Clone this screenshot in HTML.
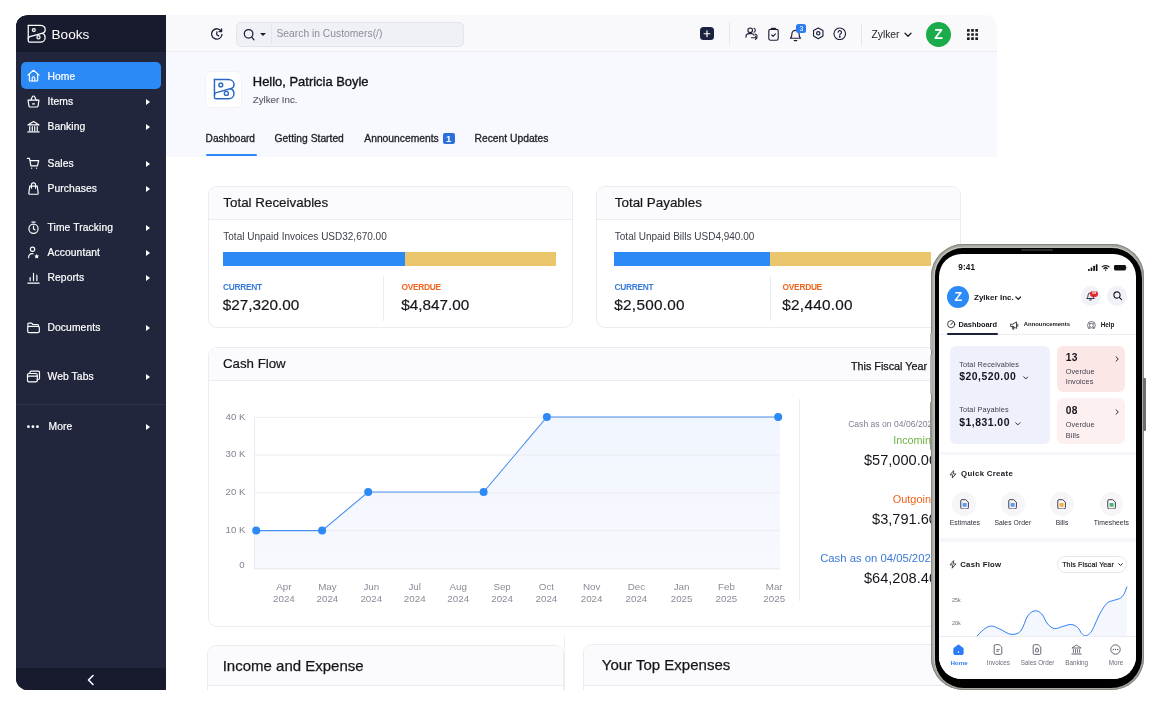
<!DOCTYPE html>
<html lang="en">
<head>
<meta charset="utf-8">
<title>Books Dashboard</title>
<style>
*{box-sizing:border-box;margin:0;padding:0}
html,body{width:1161px;height:706px;overflow:hidden;background:#fff}
body{font-family:"Liberation Sans",sans-serif;color:#1c1d24;position:relative}
.abs{position:absolute}
.t{position:absolute;white-space:nowrap;line-height:1}
/* window */
#win{will-change:transform;position:absolute;left:16px;top:15px;width:981px;height:675px;border-radius:12px 12px 0 12px;overflow:hidden;background:linear-gradient(#181b2e,#181b2e) 0 0/150px 37px no-repeat,linear-gradient(#181b2e,#181b2e) 0 100%/150px 23px no-repeat,linear-gradient(#21263c,#21263c) 0 0/150px 100% no-repeat,linear-gradient(#f9f9fc,#f9f9fc) 150px 0/100% 37px no-repeat,#fff}
#side{position:absolute;left:0;top:0;width:150px;height:675px;background:#21263c}
#side .hd{position:absolute;left:0;top:0;width:150px;height:36px;background:#181b2e}
#side .ft{position:absolute;left:0;bottom:0;width:150px;height:23px;background:#181b2e}
.nav{position:absolute;left:0;width:150px;height:26px;color:#fff;font-size:10.3px}
.nav .lb{-webkit-text-stroke:.2px #fff;position:absolute;left:32px;top:6px;line-height:14px;white-space:nowrap;letter-spacing:.1px}
.nav svg.ic{position:absolute;left:10.900px;top:5px;width:15px;height:15px}
.nav .ar{position:absolute;left:130px;top:10px;width:0;height:0;border-left:4.5px solid #fff;border-top:3.5px solid transparent;border-bottom:3.5px solid transparent}
#home{position:absolute;left:5.300px;top:46.300px;width:140px;height:27.600px;background:#2b8af6;border-radius:5px}
/* top bar */
#top{position:absolute;left:150px;top:0;width:832px;height:36.500px;background:#f9f9fc;border-bottom:1px solid #ececf1}
#hero{position:absolute;left:150px;top:30px;width:832px;height:111.500px;background:#f8f9fe}
.tab{position:absolute;top:116.600px;-webkit-text-stroke:.3px #1c1d24;font-size:10.6px;color:#1c1d24;line-height:14px;white-space:nowrap}
/* cards */
.card{position:absolute;border:1px solid #ebecf1;border-radius:9px;background:#fff;overflow:hidden}
.card .ch{position:absolute;left:0;top:0;right:0;background:#fbfbfd;border-bottom:1px solid #ebecf1}
.lbl{font-size:8.400px;font-weight:bold;letter-spacing:-.3px;margin-top:-.3px}
.amt{font-size:15.300px;color:#15161c;-webkit-text-stroke:.2px #15161c}
#phone{will-change:transform;position:absolute;left:931px;top:244px;width:213.200px;height:446.300px;border-radius:32.500px;background:#a6a8a1;box-shadow:inset 0 0 0 .9px #85877f,inset 0 0 0 2.700px #a6a8a1,inset 0 0 0 3.500px #cfd0cb}
#bezel{position:absolute;left:4.200px;top:3.800px;right:1.900px;bottom:2.200px;border-radius:28px 30.500px 31px 28.500px;background:#000}
.pbtn{position:absolute;width:2.600px;border-radius:1px}
#scr{position:absolute;left:8.300px;top:10px;width:196.600px;height:424.500px;border-radius:22.500px;background:#fff;overflow:hidden}
#wi{position:absolute;left:-.5px;top:.5px;width:982px;height:675px}
</style>
</head>
<body>
<div id="win"><div id="wi">
  <div id="side">
    <div class="hd"></div>
    <svg class="abs" style="left:11.800px;top:8.400px;width:19.300px;height:19.300px" viewBox="0 0 20 20" fill="none" stroke="#fff" stroke-width="1.3" stroke-linejoin="round" stroke-linecap="round"><path d="M1.300 1.300H13.600C16.800 1.300 18.900 3.400 18.900 5.900 18.900 7.700 17.900 8.900 16.300 9.400L3 13.100C2 13.400 1.300 14.100 1.300 15.200"/><path d="M1.300 1.300V17.300C1.300 18.200 1.900 18.700 2.700 18.700H14C16.800 18.700 18.800 16.600 18.800 14 18.800 11.800 17.600 10.200 15.600 9.600"/><circle cx="7.100" cy="6.300" r="1.500"/><circle cx="11.900" cy="13.700" r="1.600"/></svg>
    <div class="t" style="left:36px;top:12px;font-size:13.6px;color:#fff">Books</div>
    <div id="home"></div>
    <div class="nav" style="top:47.5px"><svg class="ic" viewBox="0 0 16 16" fill="none" stroke="#fff" stroke-width="1.25" stroke-linecap="round" stroke-linejoin="round"><path d="M2 7.6 8 2.4l6 5.2"/><path d="M3.6 6.6v6.6a.7.7 0 0 0 .7.7h7.4a.7.7 0 0 0 .7-.7V6.6"/><path d="M6.6 13.8v-3.1a1.4 1.4 0 0 1 2.8 0v3.1"/></svg><span class="lb" style="top:6.800px">Home</span></div>
    <div class="nav" style="top:73.5px"><svg class="ic" viewBox="0 0 16 16" fill="none" stroke="#fff" stroke-width="1.25" stroke-linecap="round" stroke-linejoin="round"><path d="M2.2 6.6h11.6l-.9 6a1.5 1.5 0 0 1-1.5 1.3H4.6a1.5 1.5 0 0 1-1.5-1.3z"/><path d="M5 6.6l1.6-3.5a1.5 1.5 0 0 1 2.8 0L11 6.6"/><path d="M7 10.6h2"/></svg><span class="lb">Items</span><i class="ar"></i></div>
    <div class="nav" style="top:98.2px"><svg class="ic" viewBox="0 0 16 16" fill="none" stroke="#fff" stroke-width="1.25" stroke-linecap="round" stroke-linejoin="round"><path d="M2 6.3 8 2.6l6 3.7z"/><path d="M4 8.2v4M6.7 8.2v4M9.3 8.2v4M12 8.2v4"/><path d="M2 13.8h12"/></svg><span class="lb">Banking</span><i class="ar"></i></div>
    <div class="nav" style="top:135.7px"><svg class="ic" viewBox="0 0 16 16" fill="none" stroke="#fff" stroke-width="1.25" stroke-linecap="round" stroke-linejoin="round"><path d="M1.5 2.5h1.6c.4 0 .7.3.8.7l1.3 7.3h7l1.3-5.6H4.2"/><circle cx="6" cy="13" r=".7" fill="#fff" stroke="none"/><circle cx="11.2" cy="13" r=".7" fill="#fff" stroke="none"/></svg><span class="lb">Sales</span><i class="ar"></i></div>
    <div class="nav" style="top:160.5px"><svg class="ic" viewBox="0 0 16 16" fill="none" stroke="#fff" stroke-width="1.25" stroke-linecap="round" stroke-linejoin="round"><path d="M4 5.4h8l1 7.6a1 1 0 0 1-1 1.1H4a1 1 0 0 1-1-1.1z"/><path d="M5.8 7.6V4.2a2.2 2.2 0 0 1 4.400 0v3.400"/></svg><span class="lb">Purchases</span><i class="ar"></i></div>
    <div class="nav" style="top:199.4px"><svg class="ic" viewBox="0 0 16 16" fill="none" stroke="#fff" stroke-width="1.25" stroke-linecap="round" stroke-linejoin="round"><circle cx="8" cy="9.300" r="4.900"/><path d="M8 6.500v3l1.500 1"/><path d="M6.300 2.200h3.400"/></svg><span class="lb">Time Tracking</span><i class="ar"></i></div>
    <div class="nav" style="top:224.6px"><svg class="ic" viewBox="0 0 16 16" fill="none" stroke="#fff" stroke-width="1.25" stroke-linecap="round" stroke-linejoin="round"><circle cx="7" cy="4.500" r="2.300"/><path d="M2.800 13.600v-.800a3.600 3.600 0 0 1 3.600-3.600h1"/><path d="M11.400 9.400l.8 1.700 1.800.2-1.300 1.300.3 1.800-1.600-.9-1.600.9.300-1.800-1.300-1.300 1.800-.2z" fill="#fff" stroke="none"/></svg><span class="lb">Accountant</span><i class="ar"></i></div>
    <div class="nav" style="top:249.6px"><svg class="ic" viewBox="0 0 16 16" fill="none" stroke="#fff" stroke-width="1.25" stroke-linecap="round" stroke-linejoin="round"><path d="M4.400 11.300V8M8 11.300V3.500M11.600 11.300V5.500"/><path d="M2 14h12"/></svg><span class="lb">Reports</span><i class="ar"></i></div>
    <div class="nav" style="top:299.0px"><svg class="ic" viewBox="0 0 16 16" fill="none" stroke="#fff" stroke-width="1.25" stroke-linecap="round" stroke-linejoin="round"><path d="M2 6.800V4.300a1 1 0 0 1 1-1h3l1.300 1.500h5a1 1 0 0 1 1 1v1"/><rect x="1.800" y="6.800" width="12.400" height="6.600" rx="1.500"/></svg><span class="lb">Documents</span><i class="ar"></i></div>
    <div class="nav" style="top:348.9px"><svg class="ic" viewBox="0 0 16 16" fill="none" stroke="#fff" stroke-width="1.25" stroke-linecap="round" stroke-linejoin="round"><rect x="1.600" y="4.800" width="10.400" height="9" rx="1.500"/><path d="M1.600 7.600h10.400"/><path d="M4.200 4.800V3.500a1.300 1.300 0 0 1 1.300-1.300h7.600a1.300 1.300 0 0 1 1.300 1.300v6.400a1.300 1.300 0 0 1-1.300 1.300H12"/></svg><span class="lb">Web Tabs</span><i class="ar"></i></div>
    <div class="abs" style="left:0;top:388px;width:150px;height:1px;background:#2e3349"></div>
    <div class="nav" style="top:398.9px"><svg class="ic" viewBox="0 0 16 16"><circle cx="2.600" cy="8.200" r="1.500" fill="#fff"/><circle cx="7.400" cy="8.200" r="1.500" fill="#fff"/><circle cx="12.200" cy="8.200" r="1.500" fill="#fff"/></svg><span class="lb" style="left:33px">More</span><i class="ar"></i></div>
    <div class="ft"></div>
    <svg class="abs" style="left:70px;top:658px;width:10px;height:12px" viewBox="0 0 10 12" fill="none" stroke="#fff" stroke-width="1.600" stroke-linecap="round" stroke-linejoin="round"><path d="M7 1.500 2.500 6 7 10.500"/></svg>
  </div>
  <div id="hero"></div>
  <div id="top"></div>

  <!-- top bar contents -->
  <svg class="abs" style="left:194px;top:12.0px;width:14px;height:13px" viewBox="0 0 14 13" fill="none" stroke="#1c2038" stroke-width="1.3" stroke-linecap="round" stroke-linejoin="round"><path d="M11.300 3.300A5.200 5.200 0 1 0 12 6.500"/><path d="M11.600 1v2.600H9"/><path d="M6.800 3.800v3l1.900 1.100"/></svg>
  <div class="abs" style="left:220.5px;top:6.5px;width:227.500px;height:24.500px;background:#f0f0f7;border:1px solid #e3e4ec;border-radius:5px"></div>
  <svg class="abs" style="left:227.5px;top:12.5px;width:12px;height:13px" viewBox="0 0 12 13" fill="none" stroke="#1c2038" stroke-width="1.250" stroke-linecap="round"><circle cx="5.600" cy="5.800" r="4.300"/><path d="M8.800 9.200l2.200 2.600"/></svg>
  <i class="abs" style="left:244.3px;top:17.3px;border-top:3.600px solid #1c2038;border-left:3.300px solid transparent;border-right:3.300px solid transparent"></i>
  <div class="abs" style="left:255.7px;top:9.0px;width:1px;height:19px;background:#e3e4ec"></div>
  <div class="t" style="left:261px;top:13.2px;font-size:10.300px;color:#8b8d9b">Search in Customers(/)</div>

  <div class="abs" style="left:684.3px;top:11.1px;width:14px;height:13.500px;background:#1c2340;border-radius:3.500px"></div>
  <svg class="abs" style="left:684.3px;top:11.1px;width:14px;height:13.500px" viewBox="0 0 14 13.500" stroke="#fff" stroke-width="1.200" stroke-linecap="round"><path d="M7 3.900v5.700M4.100 6.750h5.800"/></svg>
  <div class="abs" style="left:713px;top:6.1px;width:1px;height:23px;background:#e6e7ee"></div>
  <svg class="abs" style="left:729px;top:11.6px;width:13px;height:13px" viewBox="0 0 13 13" fill="none" stroke="#1c2038" stroke-width="1.100" stroke-linecap="round" stroke-linejoin="round"><circle cx="5.200" cy="3.300" r="2.300"/><path d="M9 1.300a2.200 2.200 0 0 1 0 4"/><path d="M1 10.300V9.600a3 3 0 0 1 3-3h2.400a3 3 0 0 1 2.600 1.500"/><path d="M10.200 6.900c1.100.4 1.800 1.300 2 2.300"/><path d="M6.500 10.800h5.500M10.400 9.200l1.700 1.600-1.700 1.600"/></svg>
  <svg class="abs" style="left:752px;top:11.1px;width:11px;height:14px" viewBox="0 0 11 14" fill="none" stroke="#1c2038" stroke-width="1.150" stroke-linecap="round" stroke-linejoin="round"><rect x=".8" y="2.300" width="9.400" height="10.900" rx="1.700"/><path d="M3.600 2.300V1.400h3.800v.900"/><path d="M3.800 8l1.300 1.300 2.300-2.500"/></svg>
  <svg class="abs" style="left:773.5px;top:12.1px;width:13px;height:14px" viewBox="0 0 13 14" fill="none" stroke="#1c2038" stroke-width="1.150" stroke-linecap="round" stroke-linejoin="round"><path d="M1.500 10.200c1.200-1 1.400-2.200 1.400-4.200a3.600 3.600 0 0 1 7.200 0c0 2 .2 3.200 1.400 4.200z"/><path d="M5.200 12.600h2.600"/></svg>
  <div class="abs" style="left:780.8px;top:8.9px;width:10px;height:9px;background:#2b7cf0;border-radius:2.500px"></div>
  <div class="t" style="left:780.8px;top:10.4px;width:10px;text-align:center;font-size:6.800px;color:#fff">3</div>
  <svg class="abs" style="left:796px;top:11.3px;width:12.500px;height:13.500px" viewBox="0 0 12.500 13.500" fill="none" stroke="#1c2038" stroke-width="1.150" stroke-linejoin="round"><path d="M6.250 .9l4.700 2.700v5.400l-4.700 2.700-4.700-2.700V3.600z" stroke-linejoin="round"/><circle cx="6.250" cy="6.300" r="1.700"/></svg>
  <svg class="abs" style="left:817.5px;top:11.3px;width:13.500px;height:13.500px" viewBox="0 0 13.500 13.500" fill="none" stroke="#1c2038" stroke-width="1.150" stroke-linecap="round" stroke-linejoin="round"><circle cx="6.750" cy="6.750" r="5.800"/><path d="M5.100 5.300a1.700 1.700 0 1 1 2.400 1.600c-.5.300-.75.600-.75 1.200"/><circle cx="6.750" cy="9.800" r=".4" fill="#1c2038"/></svg>
  <div class="abs" style="left:845.5px;top:7.0px;width:1px;height:23px;background:#e6e7ee"></div>
  <div class="t" style="left:856px;top:14.1px;font-size:10.300px;color:#1c1d24">Zylker</div>
  <svg class="abs" style="left:888.5px;top:16.3px;width:8px;height:6px" viewBox="0 0 8 6" fill="none" stroke="#1c1d24" stroke-width="1.300" stroke-linecap="round" stroke-linejoin="round"><path d="M1 1.200l3 3 3-3"/></svg>
  <div class="abs" style="left:910.5px;top:6.0px;width:25px;height:25px;border-radius:50%;background:#1aab4b"></div>
  <div class="t" style="left:910.5px;top:11.5px;width:25px;text-align:center;font-size:14px;font-weight:bold;color:#fff">Z</div>
  <svg class="abs" style="left:951.5px;top:13.0px;width:11px;height:11px" viewBox="0 0 11 11" fill="#1c1d24"><rect x="0" y="0" width="2.700" height="2.700" rx=".5"/><rect x="4.150" y="0" width="2.700" height="2.700" rx=".5"/><rect x="8.300" y="0" width="2.700" height="2.700" rx=".5"/><rect x="0" y="4.150" width="2.700" height="2.700" rx=".5"/><rect x="4.150" y="4.150" width="2.700" height="2.700" rx=".5"/><rect x="8.300" y="4.150" width="2.700" height="2.700" rx=".5"/><rect x="0" y="8.300" width="2.700" height="2.700" rx=".5"/><rect x="4.150" y="8.300" width="2.700" height="2.700" rx=".5"/><rect x="8.300" y="8.300" width="2.700" height="2.700" rx=".5"/></svg>

  <!-- hero -->
  <div class="abs" style="left:189.600px;top:55.800px;width:36.600px;height:36.800px;background:#fff;border:1px solid #f0f2f8;border-radius:6px"></div>
  <svg class="abs" style="left:197.300px;top:62.300px;width:22.300px;height:22.300px" viewBox="0 0 20 20" fill="none" stroke="#2a67c4" stroke-width="1.300" stroke-linejoin="round" stroke-linecap="round"><path d="M1.300 1.300H13.600C16.800 1.300 18.900 3.400 18.900 5.900 18.900 7.700 17.900 8.900 16.300 9.400L3 13.100C2 13.400 1.300 14.100 1.300 15.200"/><path d="M1.300 1.300V17.300C1.300 18.200 1.900 18.700 2.700 18.700H14C16.800 18.700 18.800 16.600 18.800 14 18.800 11.800 17.600 10.200 15.600 9.600"/><circle cx="7" cy="6.200" r="1.700"/><circle cx="12" cy="13.800" r="1.800"/></svg>
  <div class="t" style="left:237.300px;top:60.300px;font-size:12.950px;color:#111218;-webkit-text-stroke:.35px #111218">Hello, Patricia Boyle</div>
  <div class="t" style="left:237.300px;top:79.600px;font-size:9.700px;color:#5e6070;-webkit-text-stroke:.15px #5e6070">Zylker Inc.</div>
  <div class="tab" style="left:190.100px;font-size:10.100px">Dashboard</div>
  <div class="tab" style="left:259.100px;font-size:10.300px">Getting Started</div>
  <div class="tab" style="left:348.800px;font-size:10.300px">Announcements</div>
  <div class="abs" style="left:427.500px;top:117.300px;width:11.500px;height:11.200px;background:#2d6fd9;border-radius:2px"></div>
  <div class="t" style="left:427.500px;top:118.600px;width:11.500px;text-align:center;font-size:9.500px;font-weight:bold;color:#fff">1</div>
  <div class="tab" style="left:459px;font-size:10.300px">Recent Updates</div>
  <div class="abs" style="left:190.100px;top:138.700px;width:51px;height:2.200px;background:#2b8af6;border-radius:1px"></div>

  <!-- Total Receivables -->
  <div class="card" style="left:192px;top:170.300px;width:365px;height:142.300px">
    <div class="ch" style="height:33.500px"></div>
    <div class="t" style="left:14.800px;top:9.300px;font-size:13.400px;color:#15161c;-webkit-text-stroke:.2px #15161c">Total Receivables</div>
    <div class="t" style="left:14.800px;top:45.200px;font-size:10px;color:#3f414e">Total Unpaid Invoices USD32,670.00</div>
    <div class="abs" style="left:14.300px;top:65.200px;width:333.700px;height:14.200px;background:#ebc66c"></div>
    <div class="abs" style="left:14.300px;top:65.200px;width:182.700px;height:14.200px;background:#2b8af6"></div>
    <div class="abs" style="left:174.500px;top:89px;width:1px;height:45px;background:#ebecf1"></div>
    <div class="t lbl" style="left:14.600px;top:96.200px;color:#3a7ad6">CURRENT</div>
    <div class="t amt" style="left:14.300px;top:109.800px">$27,320.00</div>
    <div class="t lbl" style="left:193px;top:96.200px;color:#f0641e">OVERDUE</div>
    <div class="t amt" style="left:192.700px;top:109.800px">$4,847.00</div>
  </div>
  <!-- Total Payables -->
  <div class="card" style="left:580.500px;top:170.300px;width:365px;height:142.300px">
    <div class="ch" style="height:33.500px"></div>
    <div class="t" style="left:17.800px;top:9.300px;font-size:13.400px;color:#15161c;-webkit-text-stroke:.2px #15161c">Total Payables</div>
    <div class="t" style="left:17.800px;top:45.200px;font-size:10px;color:#3f414e">Total Unpaid Bills USD4,940.00</div>
    <div class="abs" style="left:17.300px;top:65.200px;width:316.700px;height:14.200px;background:#ebc66c"></div>
    <div class="abs" style="left:17.300px;top:65.200px;width:156px;height:14.200px;background:#2b8af6"></div>
    <div class="abs" style="left:173.300px;top:89px;width:1px;height:45px;background:#ebecf1"></div>
    <div class="t lbl" style="left:17.600px;top:96.200px;color:#3a7ad6">CURRENT</div>
    <div class="t amt" style="letter-spacing:.28px;left:17.300px;top:109.800px">$2,500.00</div>
    <div class="t lbl" style="left:185.600px;top:96.200px;color:#f0641e">OVERDUE</div>
    <div class="t amt" style="letter-spacing:.28px;left:185.300px;top:109.800px">$2,440.00</div>
  </div>

  <!-- Cash Flow -->
  <div class="card" style="left:192.100px;top:331.400px;width:755px;height:280px">
    <div class="ch" style="height:33.500px"></div>
    <div class="t" style="left:14.300px;top:9.300px;font-size:13.300px;color:#15161c;-webkit-text-stroke:.2px #15161c">Cash Flow</div>
    <div class="t" style="left:642.300px;top:12.700px;font-size:10.800px;color:#15161c;-webkit-text-stroke:.25px #15161c">This Fiscal Year &#9662;</div>
    <svg class="abs" style="left:0;top:.7px;width:753px;height:277px" viewBox="0 0 753 277"><defs><linearGradient id="cfg" x1="0" y1="0" x2="0" y2="1"><stop offset="0" stop-color="#f1f5fe"/><stop offset="1" stop-color="#f7f9fe"/></linearGradient></defs><polygon points="47.2,181.6 113.1,181.6 159.2,143.0 274.6,143.0 337.9,68.0 569.2,68.0 570.9,68.0 570.9,219.8 45.5,219.8 45.5,181.6" fill="url(#cfg)"/><path d="M45.5 68.3H570.9" stroke="#ececf2" stroke-width="1"/><path d="M45.5 106.1H570.9" stroke="#ececf2" stroke-width="1"/><path d="M45.5 143.8H570.9" stroke="#ececf2" stroke-width="1"/><path d="M45.5 181.6H570.9" stroke="#ececf2" stroke-width="1"/><path d="M45.5 219.8H570.9" stroke="#e4e5ec" stroke-width="1"/><path d="M45.5 68.3V219.8" stroke="#e9eaf0" stroke-width="1"/><polyline points="47.2,181.6 113.1,181.6 159.2,143.0 274.6,143.0 337.9,68.0 569.2,68.0" fill="none" stroke="#4a90ee" stroke-width="1.100"/><circle cx="47.2" cy="181.6" r="4" fill="#2b8af6"/><circle cx="113.1" cy="181.6" r="4" fill="#2b8af6"/><circle cx="159.2" cy="143.0" r="4" fill="#2b8af6"/><circle cx="274.6" cy="143.0" r="4" fill="#2b8af6"/><circle cx="337.9" cy="68.0" r="4" fill="#2b8af6"/><circle cx="569.2" cy="68.0" r="4" fill="#2b8af6"/><text x="36.30" y="70.50" text-anchor="end" font-size="9.600" fill="#7f8190">40 K</text><text x="36.30" y="108.30" text-anchor="end" font-size="9.600" fill="#7f8190">30 K</text><text x="36.30" y="146.00" text-anchor="end" font-size="9.600" fill="#7f8190">20 K</text><text x="36.30" y="184.20" text-anchor="end" font-size="9.600" fill="#7f8190">10 K</text><text x="35.70" y="219.30" text-anchor="end" font-size="9.600" fill="#7f8190">0</text><text x="74.9" y="241.20000000000002" text-anchor="middle" font-size="9.800" fill="#8a8c99">Apr</text><text x="74.9" y="253.20000000000002" text-anchor="middle" font-size="9.800" fill="#8a8c99">2024</text><text x="118.4" y="241.20000000000002" text-anchor="middle" font-size="9.800" fill="#8a8c99">May</text><text x="118.4" y="253.20000000000002" text-anchor="middle" font-size="9.800" fill="#8a8c99">2024</text><text x="162.3" y="241.20000000000002" text-anchor="middle" font-size="9.800" fill="#8a8c99">Jun</text><text x="162.3" y="253.20000000000002" text-anchor="middle" font-size="9.800" fill="#8a8c99">2024</text><text x="205.7" y="241.20000000000002" text-anchor="middle" font-size="9.800" fill="#8a8c99">Jul</text><text x="205.7" y="253.20000000000002" text-anchor="middle" font-size="9.800" fill="#8a8c99">2024</text><text x="249.2" y="241.20000000000002" text-anchor="middle" font-size="9.800" fill="#8a8c99">Aug</text><text x="249.2" y="253.20000000000002" text-anchor="middle" font-size="9.800" fill="#8a8c99">2024</text><text x="293.1" y="241.20000000000002" text-anchor="middle" font-size="9.800" fill="#8a8c99">Sep</text><text x="293.1" y="253.20000000000002" text-anchor="middle" font-size="9.800" fill="#8a8c99">2024</text><text x="337.4" y="241.20000000000002" text-anchor="middle" font-size="9.800" fill="#8a8c99">Oct</text><text x="337.4" y="253.20000000000002" text-anchor="middle" font-size="9.800" fill="#8a8c99">2024</text><text x="382.6" y="241.20000000000002" text-anchor="middle" font-size="9.800" fill="#8a8c99">Nov</text><text x="382.6" y="253.20000000000002" text-anchor="middle" font-size="9.800" fill="#8a8c99">2024</text><text x="427.4" y="241.20000000000002" text-anchor="middle" font-size="9.800" fill="#8a8c99">Dec</text><text x="427.4" y="253.20000000000002" text-anchor="middle" font-size="9.800" fill="#8a8c99">2024</text><text x="472.6" y="241.20000000000002" text-anchor="middle" font-size="9.800" fill="#8a8c99">Jan</text><text x="472.6" y="253.20000000000002" text-anchor="middle" font-size="9.800" fill="#8a8c99">2025</text><text x="517.4" y="241.20000000000002" text-anchor="middle" font-size="9.800" fill="#8a8c99">Feb</text><text x="517.4" y="253.20000000000002" text-anchor="middle" font-size="9.800" fill="#8a8c99">2025</text><text x="565.2" y="241.20000000000002" text-anchor="middle" font-size="9.800" fill="#8a8c99">Mar</text><text x="565.2" y="253.20000000000002" text-anchor="middle" font-size="9.800" fill="#8a8c99">2025</text></svg>
    <div class="abs" style="left:590.7px;top:50.8px;width:1px;height:202px;background:#ebecf1"></div>
    <div class="t" style="right:24.600px;top:72.0px;font-size:8.600px;color:#7f8190">Cash as on 04/06/2024</div>
    <div class="t" style="right:24.600px;top:86.8px;font-size:10.800px;color:#6cb341">Incoming</div>
    <div class="t" style="right:24.600px;top:105.5px;font-size:14.600px;color:#15161c">$57,000.00</div>
    <div class="t" style="right:24.600px;top:146.1px;font-size:10.900px;color:#f0641e">Outgoing</div>
    <div class="t" style="right:24.600px;top:164.3px;font-size:14.600px;color:#15161c">$3,791.60</div>
    <div class="t" style="right:24.600px;top:205.4px;font-size:11.300px;color:#3a7ad6">Cash as on 04/05/2025</div>
    <div class="t" style="right:24.600px;top:223.6px;font-size:14.600px;color:#15161c">$64,208.40</div>
  </div>
  <!-- bottom cards -->
  <div class="abs" style="left:548px;top:620px;width:1px;height:60px;background:#eeeff4"></div>
  <div class="card" style="left:191.200px;top:629.600px;width:357.500px;height:80px;border-radius:9px 9px 0 0">
    <div class="ch" style="height:39.500px"></div>
    <div class="t" style="left:15px;top:12.100px;font-size:15px;color:#15161c;-webkit-text-stroke:.25px #15161c">Income and Expense</div>
  </div>
  <div class="card" style="left:567.800px;top:628.300px;width:380px;height:80px;border-radius:9px 9px 0 0">
    <div class="ch" style="height:40.800px"></div>
    <div class="t" style="left:17.500px;top:12.500px;font-size:15px;color:#15161c;-webkit-text-stroke:.25px #15161c">Your Top Expenses</div>
  </div>
</div></div>


<!-- phone -->
<div id="phone">
 <i class="pbtn" style="left:-1.500px;top:89px;height:16.600px;background:#b4b5b0"></i>
 <i class="pbtn" style="left:-1.500px;top:110.700px;height:39.300px;background:#b4b5b0"></i>
 <i class="pbtn" style="left:-1.500px;top:157.700px;height:48.300px;background:#8f918b"></i>
 <i class="pbtn" style="left:212px;top:133.500px;height:53.500px;background:#6e6f6b"></i>
 <div id="bezel"></div>
 <div id="scr">
<div class="t" style="top:9.94px;font-size:8.2px;color:#111;font-weight:bold;letter-spacing:0.2px;left:18.90px;">9:41</div>
<svg class="abs" style="left:149.0px;top:9.6px;width:40px;height:7.2px" viewBox="0 0 40 7.2" fill="#111"><rect x="0" y="4.9" width="1.7" height="2.1" rx=".4"/><rect x="2.6" y="3.4" width="1.7" height="3.6" rx=".4"/><rect x="5.2" y="1.8" width="1.7" height="5.2" rx=".4"/><rect x="7.8" y=".2" width="1.7" height="6.8" rx=".4"/><path d="M13.4 2.7a5.8 5.8 0 0 1 8.400 0l-.9.900a4.500 4.500 0 0 0-6.600 0z"/><path d="M15.100 4.400a3.500 3.500 0 0 1 5 0l-.9.900a2.200 2.200 0 0 0-3.200 0z"/><path d="M16.700 6l.9-.8.900.8-.9 1z"/><rect x="26" y="1" width="12" height="5.400" rx="1.400"/><rect x="38.500" y="2.700" width=".9" height="2" rx=".4" fill="#999"/></svg>
<div class="abs" style="left:8.1px;top:31.9px;width:22px;height:22px;border-radius:50%;background:#2b8af6"></div>
<div class="t" style="top:36.90px;font-size:12.5px;color:#fff;font-weight:bold;left:-30.90px;width:100px;text-align:center;">Z</div>
<div class="t" style="top:40.04px;font-size:8px;color:#15161c;font-weight:bold;letter-spacing:0.02px;left:34.70px;">Zylker Inc.</div>
<svg class="abs" style="left:75.7px;top:41.8px;width:6.5px;height:4.5px" viewBox="0 0 6.5 4.5" fill="none" stroke="#15161c" stroke-width="1.2" stroke-linecap="round" stroke-linejoin="round"><path d="M.8.9l2.450 2.500L5.700.9"/></svg>
<div class="abs" style="left:141.9px;top:32.1px;width:19.7px;height:19.7px;border-radius:50%;background:#f1f2f7"></div>
<div class="abs" style="left:168.1px;top:32.1px;width:19.7px;height:19.7px;border-radius:50%;background:#f1f2f7"></div>
<svg class="abs" style="left:147.0px;top:37.2px;width:9px;height:10px" viewBox="0 0 9 10" fill="none" stroke="#1c2038" stroke-width=".9" stroke-linecap="round" stroke-linejoin="round"><path d="M1 7.200c.8-.7 1-1.500 1-2.900a2.500 2.500 0 0 1 5 0c0 1.400.2 2.200 1 2.900z"/><path d="M3.600 8.900h1.800"/></svg>
<div class="abs" style="left:151.1px;top:36.7px;width:7.8px;height:5.9px;border-radius:3px;background:#e5262d"></div>
<div class="t" style="top:37.83px;font-size:3.6px;color:#fff;font-weight:bold;left:105.00px;width:100px;text-align:center;">08</div>
<svg class="abs" style="left:173.3px;top:37.2px;width:9.5px;height:9.5px" viewBox="0 0 9.5 9.5" fill="none" stroke="#15161c" stroke-width="1.100" stroke-linecap="round"><circle cx="4" cy="4" r="3.100"/><path d="M6.300 6.300l2.300 2.300"/></svg>
<svg class="abs" style="left:7.9px;top:66.2px;width:8.4px;height:8.4px" viewBox="0 0 8.4 8.4" fill="none" stroke="#15161c" stroke-width=".8" stroke-linecap="round"><circle cx="4.2" cy="4.2" r="3.600"/><path d="M4 4.500l1.700-1.900" stroke-width="1"/></svg>
<div class="t" style="top:67.25px;font-size:7.4px;color:#15161c;font-weight:bold;left:19.10px;">Dashboard</div>
<svg class="abs" style="left:70.4px;top:66.6px;width:9.5px;height:9px" viewBox="0 0 9.5 9" fill="none" stroke="#15161c" stroke-width=".8" stroke-linejoin="round" stroke-linecap="round"><path d="M.7 3.200h2l3.800-2.200v6.400L2.700 5.300h-2z"/><path d="M2.200 5.500l.6 2.700h1.200l-.5-2.500"/><path d="M7.800 3.200v2.300"/></svg>
<div class="t" style="top:67.93px;font-size:5.9px;color:#15161c;font-weight:bold;left:84.50px;">Announcements</div>
<svg class="abs" style="left:148.0px;top:66.7px;width:8.8px;height:8.8px" viewBox="0 0 8.8 8.8" fill="none" stroke="#3f4154" stroke-width=".7"><circle cx="4.4" cy="4.4" r="3.900"/><circle cx="4.4" cy="4.4" r="2"/><path d="M1.700 1.700l1.300 1.300M7.100 1.700L5.800 3M1.700 7.100L3 5.800M7.100 7.100L5.800 5.800"/></svg>
<div class="t" style="top:68.02px;font-size:6.3px;color:#15161c;font-weight:bold;left:161.50px;">Help</div>
<div class="abs" style="left:0;top:80.0px;width:197px;height:1px;background:#eceef5"></div>
<div class="abs" style="left:8.1px;top:79.4px;width:51px;height:1.7px;background:#1c2038;border-radius:1px"></div>
<div class="abs" style="left:10.6px;top:92.2px;width:100.3px;height:97.9px;border-radius:6px;background:#eef0fb"></div>
<div class="t" style="top:106.80px;font-size:7.3px;color:#3f414e;letter-spacing:0.15px;left:19.90px;">Total Receivables</div>
<div class="t" style="top:118.19px;font-size:10.4px;color:#15161c;font-weight:bold;letter-spacing:0.5px;left:19.90px;">$20,520.00</div>
<svg class="abs" style="left:83.5px;top:121.7px;width:5.6px;height:4px" viewBox="0 0 5.6 4" fill="none" stroke="#15161c" stroke-width=".9" stroke-linecap="round" stroke-linejoin="round"><path d="M.7.800l2.100 2.100L4.900.800"/></svg>
<div class="t" style="top:152.40px;font-size:7.3px;color:#3f414e;letter-spacing:0.15px;left:19.90px;">Total Payables</div>
<div class="t" style="top:164.09px;font-size:10.4px;color:#15161c;font-weight:bold;letter-spacing:0.5px;left:19.90px;">$1,831.00</div>
<svg class="abs" style="left:75.7px;top:167.6px;width:5.6px;height:4px" viewBox="0 0 5.6 4" fill="none" stroke="#15161c" stroke-width=".9" stroke-linecap="round" stroke-linejoin="round"><path d="M.7.800l2.100 2.100L4.900.800"/></svg>
<div class="abs" style="left:117.3px;top:92.2px;width:68.4px;height:46.3px;border-radius:6px;background:#fce7e7"></div>
<div class="abs" style="left:117.3px;top:144.3px;width:68.4px;height:46px;border-radius:6px;background:#fdf0f0"></div>
<div class="t" style="top:99.20px;font-size:10.2px;color:#15161c;font-weight:bold;letter-spacing:0.2px;left:126.50px;">13</div>
<div class="t" style="top:114.20px;font-size:7.3px;color:#3f414e;letter-spacing:0.12px;left:126.50px;">Overdue</div>
<div class="t" style="top:124.40px;font-size:7.3px;color:#3f414e;letter-spacing:0.12px;left:126.50px;">Invoices</div>
<div class="t" style="top:152.30px;font-size:10.2px;color:#15161c;font-weight:bold;letter-spacing:0.2px;left:126.50px;">08</div>
<div class="t" style="top:167.40px;font-size:7.3px;color:#3f414e;letter-spacing:0.12px;left:126.50px;">Overdue</div>
<div class="t" style="top:177.60px;font-size:7.3px;color:#3f414e;letter-spacing:0.12px;left:126.50px;">Bills</div>
<svg class="abs" style="left:175.7px;top:101.5px;width:4.5px;height:6px" viewBox="0 0 4.5 6" fill="none" stroke="#15161c" stroke-width=".9" stroke-linecap="round" stroke-linejoin="round"><path d="M1 .8l2.300 2.200L1 5.200"/></svg>
<svg class="abs" style="left:175.7px;top:154.7px;width:4.5px;height:6px" viewBox="0 0 4.5 6" fill="none" stroke="#15161c" stroke-width=".9" stroke-linecap="round" stroke-linejoin="round"><path d="M1 .8l2.300 2.200L1 5.200"/></svg>
<div class="abs" style="left:0;top:197.8px;width:197px;height:3.3px;background:#f6f7fa"></div>
<svg class="abs" style="left:10.2px;top:215.6px;width:8px;height:8.8px" viewBox="0 0 8 8.8" fill="none" stroke="#15161c" stroke-width=".75" stroke-linejoin="round"><path d="M4.700.600L1 4.900h2.700L3.200 8.200 6.900 3.900H4.200z"/></svg>
<div class="t" style="top:216.14px;font-size:7.8px;color:#15161c;font-weight:bold;letter-spacing:0.33px;left:21.70px;">Quick Create</div>
<div class="abs" style="left:13.1px;top:238.3px;width:23.6px;height:23.6px;border-radius:50%;background:#f6f6f9"></div>
<svg class="abs" style="left:20.3px;top:244.7px;width:9.2px;height:10.8px" viewBox="0 0 8 9.6" fill="none" stroke="#2a2c3a" stroke-width=".8" stroke-linejoin="round"><path d="M1.600.600h3.400l2.400 2.300v4.700a1.300 1.300 0 0 1-1.300 1.300H1.900A1.300 1.300 0 0 1 .6 7.600V1.600a1 1 0 0 1 1-1z"/><rect x="2.200" y="3.600" width="3.600" height="3.400" rx=".5" fill="#3b82f6" stroke="none" opacity=".8"/></svg>
<div class="t" style="top:265.66px;font-size:6.8px;color:#2a2c38;letter-spacing:0.05px;left:-24.50px;width:100px;text-align:center;">Estimates</div>
<div class="abs" style="left:61.7px;top:238.3px;width:23.6px;height:23.6px;border-radius:50%;background:#f6f6f9"></div>
<svg class="abs" style="left:68.9px;top:244.7px;width:9.2px;height:10.8px" viewBox="0 0 8 9.6" fill="none" stroke="#2a2c3a" stroke-width=".8" stroke-linejoin="round"><path d="M1.600.600h3.400l2.400 2.300v4.700a1.300 1.300 0 0 1-1.300 1.300H1.900A1.300 1.300 0 0 1 .6 7.600V1.600a1 1 0 0 1 1-1z"/><rect x="2.200" y="3.600" width="3.600" height="3.400" rx=".5" fill="#3b82f6" stroke="none" opacity=".8"/></svg>
<div class="t" style="top:265.66px;font-size:6.8px;color:#2a2c38;letter-spacing:0.05px;left:23.50px;width:100px;text-align:center;">Sales Order</div>
<div class="abs" style="left:110.9px;top:238.3px;width:23.6px;height:23.6px;border-radius:50%;background:#f6f6f9"></div>
<svg class="abs" style="left:118.1px;top:244.7px;width:9.2px;height:10.8px" viewBox="0 0 8 9.6" fill="none" stroke="#2a2c3a" stroke-width=".8" stroke-linejoin="round"><path d="M1.600.600h3.400l2.400 2.300v4.700a1.300 1.300 0 0 1-1.300 1.300H1.900A1.300 1.300 0 0 1 .6 7.600V1.600a1 1 0 0 1 1-1z"/><rect x="2.200" y="3.600" width="3.600" height="3.400" rx=".5" fill="#f59e0b" stroke="none" opacity=".8"/></svg>
<div class="t" style="top:265.66px;font-size:6.8px;color:#2a2c38;letter-spacing:0.05px;left:72.70px;width:100px;text-align:center;">Bills</div>
<div class="abs" style="left:160.3px;top:238.3px;width:23.6px;height:23.6px;border-radius:50%;background:#f6f6f9"></div>
<svg class="abs" style="left:167.5px;top:244.7px;width:9.2px;height:10.8px" viewBox="0 0 8 9.6" fill="none" stroke="#2a2c3a" stroke-width=".8" stroke-linejoin="round"><path d="M1.600.600h3.400l2.400 2.300v4.700a1.300 1.300 0 0 1-1.300 1.300H1.900A1.300 1.300 0 0 1 .6 7.600V1.600a1 1 0 0 1 1-1z"/><rect x="2.200" y="3.600" width="3.600" height="3.400" rx=".5" fill="#22a55b" stroke="none" opacity=".8"/></svg>
<div class="t" style="top:265.66px;font-size:6.8px;color:#2a2c38;letter-spacing:0.05px;left:122.10px;width:100px;text-align:center;">Timesheets</div>
<div class="abs" style="left:0;top:284.4px;width:197px;height:4px;background:#f6f7fb"></div>
<svg class="abs" style="left:9.5px;top:305.8px;width:8px;height:8.8px" viewBox="0 0 8 8.8" fill="none" stroke="#15161c" stroke-width=".75" stroke-linejoin="round"><path d="M4.700.600L1 4.900h2.700L3.200 8.200 6.900 3.900H4.200z"/></svg>
<div class="t" style="top:306.74px;font-size:7.8px;color:#15161c;font-weight:bold;letter-spacing:0.25px;left:20.90px;">Cash Flow</div>
<div class="abs" style="left:117.7px;top:301.5px;width:70.3px;height:17px;border-radius:8.5px;border:1px solid #e4e6ee;background:#fff"></div>
<div class="t" style="top:306.93px;font-size:7.05px;color:#15161c;letter-spacing:0.12px;left:122.90px;-webkit-text-stroke:.2px #15161c;">This Fiscal Year</div>
<svg class="abs" style="left:178.9px;top:308.8px;width:5px;height:3.6px" viewBox="0 0 5 3.6" fill="none" stroke="#15161c" stroke-width=".9" stroke-linecap="round" stroke-linejoin="round"><path d="M.7.700l1.800 1.800L4.300.700"/></svg>
<div class="t" style="top:344.39px;font-size:5.4px;color:#6a6c78;left:12.60px;">25k</div>
<div class="t" style="top:367.19px;font-size:5.4px;color:#6a6c78;left:12.60px;">20k</div>
<svg class="abs" style="left:0;top:0;width:196.6px;height:424.5px" viewBox="0 0 196.6 424.5"><path d="M37.8 382.3C38.95 381.17 42.28 377.22 44.70 375.50C47.12 373.78 49.63 372.08 52.30 372.00C54.97 371.92 57.42 373.62 60.70 375.00C63.98 376.38 68.50 379.97 72.00 380.30C75.50 380.63 78.92 380.05 81.70 377.00C84.48 373.95 86.33 365.37 88.70 362.00C91.07 358.63 93.57 357.13 95.90 356.80C98.23 356.47 100.57 357.80 102.70 360.00C104.83 362.20 106.55 367.57 108.70 370.00C110.85 372.43 113.10 374.18 115.60 374.60C118.10 375.02 120.93 373.18 123.70 372.50C126.47 371.82 129.70 370.33 132.20 370.50C134.70 370.67 136.95 372.00 138.70 373.50C140.45 375.00 141.35 378.13 142.70 379.50C144.05 380.87 145.13 382.12 146.80 381.70C148.47 381.28 150.38 380.62 152.70 377.00C155.02 373.38 158.20 364.58 160.70 360.00C163.20 355.42 165.38 351.77 167.70 349.50C170.02 347.23 172.43 347.23 174.60 346.40C176.77 345.57 179.02 345.48 180.70 344.50C182.38 343.52 183.48 342.48 184.70 340.50C185.92 338.52 187.45 333.92 188.00 332.60V386.0H37.8Z" fill="#f5f7fe"/><path d="M37.8 382.3C38.95 381.17 42.28 377.22 44.70 375.50C47.12 373.78 49.63 372.08 52.30 372.00C54.97 371.92 57.42 373.62 60.70 375.00C63.98 376.38 68.50 379.97 72.00 380.30C75.50 380.63 78.92 380.05 81.70 377.00C84.48 373.95 86.33 365.37 88.70 362.00C91.07 358.63 93.57 357.13 95.90 356.80C98.23 356.47 100.57 357.80 102.70 360.00C104.83 362.20 106.55 367.57 108.70 370.00C110.85 372.43 113.10 374.18 115.60 374.60C118.10 375.02 120.93 373.18 123.70 372.50C126.47 371.82 129.70 370.33 132.20 370.50C134.70 370.67 136.95 372.00 138.70 373.50C140.45 375.00 141.35 378.13 142.70 379.50C144.05 380.87 145.13 382.12 146.80 381.70C148.47 381.28 150.38 380.62 152.70 377.00C155.02 373.38 158.20 364.58 160.70 360.00C163.20 355.42 165.38 351.77 167.70 349.50C170.02 347.23 172.43 347.23 174.60 346.40C176.77 345.57 179.02 345.48 180.70 344.50C182.38 343.52 183.48 342.48 184.70 340.50C185.92 338.52 187.45 333.92 188.00 332.60" fill="none" stroke="#2b7cf0" stroke-width="1"/></svg>
<div class="abs" style="left:0;top:382.3px;width:197px;height:45px;background:#fff;border-top:1px solid #ececf1"></div>
<svg class="abs" style="left:14.2px;top:390.0px;width:11px;height:11px" viewBox="0 0 11 11"><path d="M5.500.900L.9 4.300V9.700a.8.800 0 0 0 .8.800h7.600a.8.800 0 0 0 .8-.8V4.300z" fill="#2b7cf6" stroke="#2b7cf6" stroke-width="1" stroke-linejoin="round"/><rect x="4.900" y="7.300" width="1.200" height="1.400" rx=".3" fill="#fff"/></svg>
<div class="t" style="top:405.88px;font-size:6.2px;color:#2b7cf6;font-weight:bold;left:-30.30px;width:100px;text-align:center;">Home</div>
<svg class="abs" style="left:53.5px;top:390.0px;width:11px;height:11px" viewBox="0 0 11 11"><path d="M2.500.700h3.700l2.600 2.500v5.900a1.300 1.300 0 0 1-1.300 1.300H2.500a1.300 1.300 0 0 1-1.300-1.300V2a1.300 1.300 0 0 1 1.300-1.300z" fill="none" stroke="#4a4c5a" stroke-width=".85" stroke-linejoin="round"/><path d="M3.700 5.600h2.700M3.700 7.300h1.600" stroke="#4a4c5a" stroke-width=".8" stroke-linecap="round"/></svg>
<div class="t" style="top:405.82px;font-size:6.3px;color:#6a6c78;left:9.00px;width:100px;text-align:center;">Invoices</div>
<svg class="abs" style="left:92.7px;top:390.0px;width:11px;height:11px" viewBox="0 0 11 11"><path d="M2.500.700h3.700l2.600 2.500v5.900a1.300 1.300 0 0 1-1.300 1.300H2.500a1.300 1.300 0 0 1-1.300-1.300V2a1.300 1.300 0 0 1 1.300-1.300z" fill="none" stroke="#4a4c5a" stroke-width=".85" stroke-linejoin="round"/><rect x="3.500" y="4.900" width="3" height="3" rx=".5" fill="none" stroke="#4a4c5a" stroke-width=".8"/><path d="M4.400 4.900v-.5a.6.600 0 0 1 1.200 0v.5" fill="none" stroke="#4a4c5a" stroke-width=".6"/></svg>
<div class="t" style="top:405.82px;font-size:6.3px;color:#6a6c78;left:48.20px;width:100px;text-align:center;">Sales Order</div>
<svg class="abs" style="left:131.9px;top:390.0px;width:11px;height:11px" viewBox="0 0 11 11"><path d="M.9 4L5.500 1l4.600 3z" fill="none" stroke="#4a4c5a" stroke-width=".8" stroke-linejoin="round"/><path d="M2.400 5.200v3.600M4.500 5.200v3.600M6.500 5.200v3.600M8.600 5.200v3.600" stroke="#4a4c5a" stroke-width=".8"/><path d="M.9 10h9.200" stroke="#4a4c5a" stroke-width=".9" stroke-linecap="round"/></svg>
<div class="t" style="top:405.82px;font-size:6.3px;color:#6a6c78;left:87.40px;width:100px;text-align:center;">Banking</div>
<svg class="abs" style="left:171.2px;top:390.0px;width:11px;height:11px" viewBox="0 0 11 11"><circle cx="5.500" cy="5.500" r="4.700" fill="none" stroke="#4a4c5a" stroke-width=".85"/><circle cx="3.300" cy="5.500" r=".65" fill="#4a4c5a"/><circle cx="5.500" cy="5.500" r=".65" fill="#4a4c5a"/><circle cx="7.700" cy="5.500" r=".65" fill="#4a4c5a"/></svg>
<div class="t" style="top:405.82px;font-size:6.3px;color:#6a6c78;left:126.70px;width:100px;text-align:center;">More</div>
 </div>
 <div class="abs" style="left:90px;top:5.3px;width:32px;height:1.3px;border-radius:1px;background:#2a2a2e"></div>
</div>

</body>
</html>
